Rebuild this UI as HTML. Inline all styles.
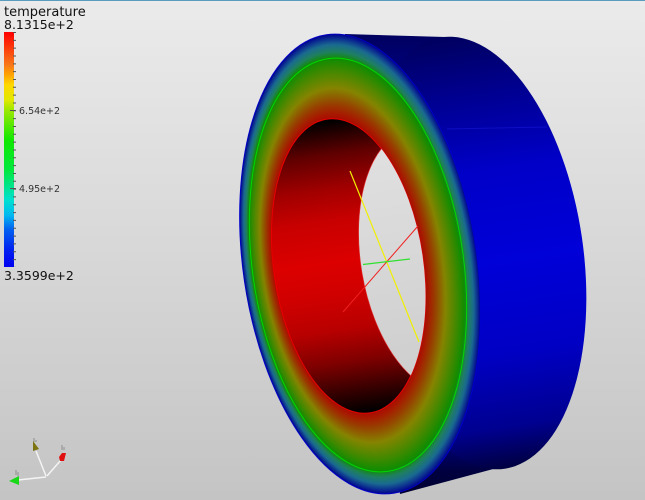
<!DOCTYPE html>
<html><head><meta charset="utf-8">
<style>
html,body{margin:0;padding:0;background:#d8d8d8}
svg{display:block;position:absolute;left:0;top:0}
text{font-family:"DejaVu Sans","Liberation Sans",sans-serif}
</style></head>
<body>
<svg width="645" height="500" viewBox="0 0 645 500" xmlns="http://www.w3.org/2000/svg">
<defs>
<linearGradient id="bg" gradientUnits="userSpaceOnUse" x1="0" y1="0" x2="0" y2="500">
<stop offset="0" stop-color="#ebebeb"/><stop offset="1" stop-color="#c4c4c4"/>
</linearGradient>
<linearGradient id="body" gradientUnits="userSpaceOnUse" x1="0" y1="36" x2="0" y2="494">
<stop offset="0" stop-color="#000060"/><stop offset=".12" stop-color="#00008c"/><stop offset=".3" stop-color="#0000c8"/><stop offset=".5" stop-color="#0000d8"/><stop offset=".7" stop-color="#0000c4"/><stop offset=".86" stop-color="#000090"/><stop offset=".95" stop-color="#000040"/><stop offset="1" stop-color="#000030"/>
</linearGradient>
<linearGradient id="inner" gradientUnits="userSpaceOnUse" x1="0" y1="119" x2="0" y2="413">
<stop offset="0" stop-color="#000"/><stop offset=".115" stop-color="#600000"/><stop offset=".23" stop-color="#a00000"/><stop offset=".34" stop-color="#c80000"/><stop offset=".456" stop-color="#d80000"/><stop offset=".48" stop-color="#dc0000"/><stop offset=".59" stop-color="#d00000"/><stop offset=".71" stop-color="#b80000"/><stop offset=".82" stop-color="#800000"/><stop offset=".93" stop-color="#300000"/><stop offset="1" stop-color="#000"/>
</linearGradient>
<radialGradient id="face" cx=".5" cy=".5" r=".5" fx=".361" fy=".502">
<stop offset=".62" stop-color="#a80000"/><stop offset=".66" stop-color="#a81800"/><stop offset=".7" stop-color="#983c00"/><stop offset=".77" stop-color="#858400"/><stop offset=".83" stop-color="#4e8800"/><stop offset=".895" stop-color="#108c00"/><stop offset=".925" stop-color="#1f7f60"/><stop offset=".955" stop-color="#1a6a90"/><stop offset=".98" stop-color="#0c3090"/><stop offset="1" stop-color="#000090"/>
</radialGradient>
<linearGradient id="bar" gradientUnits="userSpaceOnUse" x1="0" y1="32" x2="0" y2="267">
<stop offset="0" stop-color="#ff0000"/><stop offset=".14" stop-color="#f87818"/><stop offset=".18" stop-color="#ffa000"/><stop offset=".225" stop-color="#ffd800"/><stop offset=".29" stop-color="#e0e800"/><stop offset=".33" stop-color="#a0e800"/><stop offset=".46" stop-color="#10e800"/><stop offset=".59" stop-color="#00e840"/><stop offset=".715" stop-color="#00e0d0"/><stop offset=".78" stop-color="#00b8f0"/><stop offset=".84" stop-color="#0060f0"/><stop offset=".93" stop-color="#0020f0"/><stop offset="1" stop-color="#0000f0"/>
</linearGradient>
<clipPath id="hole"><ellipse cx="348.5" cy="266" rx="74.8" ry="148.4" transform="rotate(-8.34 348.5 266)"/></clipPath>
</defs>
<rect width="645" height="500" fill="url(#bg)"/>
<rect width="645" height="1" fill="#5a9cc0"/>

<polygon points="345,34 445,37 497,468 400,494" fill="url(#body)"/>
<ellipse cx="473" cy="253" rx="110" ry="218" transform="rotate(-8.34 473 253)" fill="url(#body)"/>
<line x1="447" y1="129" x2="547" y2="127" stroke="#1c1ce0" stroke-width="1" opacity=".5"/>

<ellipse cx="360" cy="264" rx="116.9" ry="231.8" transform="rotate(-8.34 360 264)" fill="url(#face)"/>
<ellipse cx="360" cy="264" rx="116.9" ry="231.8" transform="rotate(-8.34 360 264)" fill="none" stroke="#0000d0" stroke-width=".8"/>
<ellipse cx="358" cy="265" rx="105.5" ry="208.5" transform="rotate(-8.34 358 265)" fill="none" stroke="#00d800" stroke-width="1"/>

<ellipse cx="348.5" cy="266" rx="74.8" ry="148.4" transform="rotate(-8.34 348.500 266)" fill="url(#inner)" stroke="#e80000" stroke-width="1"/>
<g clip-path="url(#hole)">
<ellipse cx="431" cy="261" rx="70" ry="132" transform="rotate(-9.5 431 261)" fill="url(#bg)" stroke="#e03030" stroke-width=".6"/>
</g>

<line x1="350" y1="171" x2="419" y2="342" stroke="#f0f000" stroke-width="1.2"/>
<line x1="343" y1="312" x2="418" y2="226" stroke="#f02020" stroke-width="1"/>
<line x1="363" y1="264.500" x2="410" y2="259" stroke="#30e030" stroke-width="1.2"/>

<rect x="4" y="32" width="10" height="235" fill="url(#bar)"/>
<line x1="14.500" y1="32" x2="14.500" y2="267" stroke="#555" stroke-width="3" stroke-dasharray="1 6.83"/>
<line x1="10" y1="110.500" x2="16" y2="110.500" stroke="#555" stroke-width="1"/>
<line x1="10" y1="188.500" x2="16" y2="188.500" stroke="#555" stroke-width="1"/>
<text x="4" y="16" font-size="13" fill="#111">temperature</text>
<text x="4" y="29" font-size="12.500" fill="#111">8.1315e+2</text>
<text x="19" y="114" font-size="9.500" fill="#333">6.54e+2</text>
<text x="19" y="192" font-size="9.500" fill="#333">4.95e+2</text>
<text x="4" y="280" font-size="12.500" fill="#111">3.3599e+2</text>

<g fill="none" stroke="#f4f4f4" stroke-width="1.500">
<line x1="46" y1="477" x2="18" y2="480"/>
<line x1="46" y1="476" x2="36" y2="451"/>
<line x1="47" y1="476" x2="61" y2="460"/>
</g>
<polygon points="9,481 19,476 19,485" fill="#18d818"/>
<polygon points="33,441 39,449 33,451" fill="#7c7410"/>
<polygon points="66,453 64,461 60,461 59,457 62,453" fill="#e01010"/>
<g fill="none" stroke="#808080" stroke-width=".8">
<path d="M16 470v5M18 472v4"/>
<path d="M34 438v4M36 440v2"/>
<path d="M62 445v5M64 447v3"/>
</g>
</svg>
</body></html>
